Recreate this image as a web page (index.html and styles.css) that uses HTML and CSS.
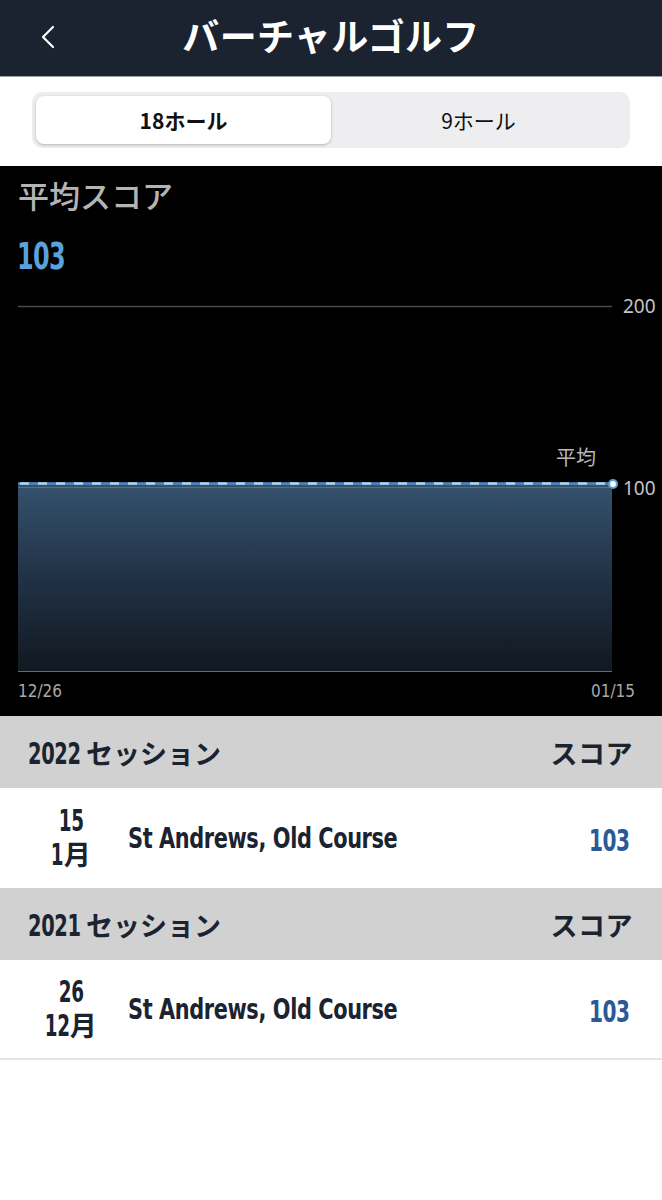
FILE: index.html
```html
<!DOCTYPE html>
<html lang="ja">
<head>
<meta charset="utf-8">
<link rel="stylesheet" href="styles.css">
</head>
<body>
<header class="topbar">
  <button class="back" aria-label="戻る">
    <svg width="16" height="24" viewBox="0 0 16 24"><path d="M13 2 L3 12 L13 22" fill="none" stroke="#ffffff" stroke-width="2.2" stroke-linecap="round" stroke-linejoin="round"/></svg>
  </button>
  <h1 class="title">バーチャルゴルフ</h1>
</header>

<div class="segwrap">
  <div class="seg">
    <div class="seg-item active">18ホール</div>
    <div class="seg-item">9ホール</div>
  </div>
</div>

<section class="chart">
  <div class="chart-title">平均スコア</div>
  <div class="chart-score"><span class="cond">103</span></div>
  <svg class="chart-svg" width="662" height="443" viewBox="0 0 662 443">
    <defs>
      <linearGradient id="areaGrad" x1="0" y1="0" x2="0" y2="1">
        <stop offset="0" stop-color="#35526e"/>
        <stop offset="0.5" stop-color="#213246"/>
        <stop offset="1" stop-color="#111820"/>
      </linearGradient>
    </defs>
    <line x1="18" y1="33.5" x2="612" y2="33.5" stroke="#4a4a4a" stroke-width="1.5"/>
    <text x="623" y="40" class="axis">200</text>
    <rect x="18" y="210" width="594" height="188" fill="url(#areaGrad)"/>
    <line x1="18" y1="214.5" x2="612" y2="214.5" stroke="#52708d" stroke-width="1"/>
    <line x1="18" y1="210.5" x2="612" y2="210.5" stroke="#4d8ccb" stroke-width="2.5"/>
    <line x1="20" y1="210.5" x2="608" y2="210.5" stroke="#b4d4ee" stroke-width="2.5" stroke-dasharray="9 9"/>
    <circle cx="613" cy="211" r="4" fill="#ffffff" stroke="#5b9bd5" stroke-width="2.2"/>
    <text x="556" y="192" class="avg">平均</text>
    <text x="623" y="222" class="axis">100</text>
    <line x1="18" y1="398.5" x2="612" y2="398.5" stroke="#6a6a6a" stroke-width="1"/>
    <text x="18" y="424" class="date">12/26</text>
    <text x="635" y="424" class="date" text-anchor="end">01/15</text>
  </svg>
</section>

<section class="session">
  <div class="session-head">
    <span class="sh-left"><span class="year"><span class="cond">2022</span></span>セッション</span>
    <span class="sh-right">スコア</span>
  </div>
  <div class="round">
    <div class="r-date"><span class="day"><span class="cond">15</span></span><span class="month"><span class="cond mnum">1</span>月</span></div>
    <div class="r-course"><span class="cond">St Andrews, Old Course</span></div>
    <div class="r-score"><span class="cond">103</span></div>
  </div>
</section>

<section class="session">
  <div class="session-head">
    <span class="sh-left"><span class="year"><span class="cond">2021</span></span>セッション</span>
    <span class="sh-right">スコア</span>
  </div>
  <div class="round last">
    <div class="r-date"><span class="day"><span class="cond">26</span></span><span class="month"><span class="cond mnum two">12</span>月</span></div>
    <div class="r-course"><span class="cond">St Andrews, Old Course</span></div>
    <div class="r-score"><span class="cond">103</span></div>
  </div>
</section>
</body>
</html>
```

FILE: styles.css
```css
* { box-sizing: border-box; }
html, body { margin: 0; padding: 0; background: #ffffff; }
body {
  width: 662px;
  font-family: "Noto Sans CJK JP", "Noto Sans", sans-serif;
}

.cond {
  display: inline-block;
  font-family: "DejaVu Sans Condensed", "DejaVu Sans", sans-serif;
  font-weight: 700;
  white-space: nowrap;
}

.topbar {
  height: 76px;
  background: #1b2330;
  display: flex;
  align-items: center;
  justify-content: center;
  position: relative;
}
.back {
  position: absolute;
  left: 40px;
  top: 25px;
  background: none;
  border: 0;
  padding: 0;
  width: 16px;
  height: 24px;
  display: flex;
}
.title {
  margin: 0;
  color: #ffffff;
  font-size: 37px;
  font-weight: 700;
  line-height: 1;
  margin-top: -6px;
  letter-spacing: 0.3px;
}

.segwrap {
  height: 90px;
  padding: 15px 32px 0 32px;
  border-top: 1px solid #9aa0a8;
}
.seg {
  height: 56px;
  background: #eeeef0;
  border-radius: 10px;
  padding: 4px;
  display: flex;
}
.seg-item {
  flex: 1;
  display: flex;
  align-items: center;
  justify-content: center;
  font-size: 21px;
  font-weight: 400;
  color: #111111;
  border-radius: 8px;
}
.seg-item.active {
  background: #ffffff;
  font-weight: 700;
  box-shadow: 0 1px 3px rgba(0,0,0,0.25);
}

.chart {
  background: #000000;
  height: 550px;
  padding-top: 9px;
}
.chart-title {
  color: #b4b4b4;
  font-size: 31px;
  font-weight: 500;
  line-height: 40px;
  padding-left: 18px;
}
.chart-score {
  color: #5aa2dc;
  font-size: 38px;
  line-height: 40px;
  height: 40px;
  margin-top: 18px;
  padding-left: 17px;
}
.chart-score .cond {
  transform: scaleX(0.7);
  transform-origin: left center;
  letter-spacing: -1px;
}
.chart-svg { display: block; }
.axis {
  fill: #c4c4c4;
  font-family: "Noto Sans", sans-serif;
  font-size: 19px;
}
.avg {
  fill: #b8b8b8;
  font-family: "Noto Sans CJK JP", sans-serif;
  font-size: 20px;
}
.date {
  fill: #a8a8a8;
  font-family: "DejaVu Sans Condensed", "Noto Sans", sans-serif;
  font-size: 17px;
}

.session-head {
  height: 72px;
  background: #d1d1d1;
  display: flex;
  align-items: center;
  justify-content: space-between;
  padding: 0 29px 0 28px;
  color: #1b2330;
  font-size: 27px;
  font-weight: 700;
}
.sh-left { display: flex; align-items: center; }
.year {
  display: inline-block;
  width: 58px;
  font-size: 30px;
  line-height: 1;
}
.year .cond {
  transform: scaleX(0.72);
  transform-origin: left center;
  letter-spacing: -0.5px;
}
.sh-right { letter-spacing: 0.5px; }

.round {
  height: 100px;
  background: #ffffff;
  display: flex;
  align-items: center;
  padding-right: 32px;
  color: #1b2330;
}
.round.last { border-bottom: 2px solid #e4e4e4; }
.r-date {
  width: 128px;
  padding-left: 14px;
  padding-bottom: 5px;
  display: flex;
  flex-direction: column;
  align-items: center;
  font-weight: 700;
  line-height: 36px;
}
.day { font-size: 30px; height: 36px; display: block; }
.day .cond {
  transform: scaleX(0.68);
  transform-origin: center;
  letter-spacing: -0.5px;
}
.month {
  font-size: 27px;
  display: flex;
  align-items: baseline;
  height: 36px;
}
.mnum {
  font-size: 30px;
  transform: scaleX(0.68);
  transform-origin: right center;
  letter-spacing: -0.5px;
  margin-left: -6px;
}
.mnum.two { margin-left: -12px; }
.r-course {
  flex: 1;
  font-size: 29px;
  color: #1b2330;
  padding-bottom: 6px;
}
.r-course .cond {
  transform: scaleX(0.8);
  transform-origin: left center;
  letter-spacing: -0.5px;
}
.r-score {
  color: #2a5a96;
  font-size: 31px;
  text-align: right;
  padding-bottom: 2px;
}
.r-score .cond {
  transform: scaleX(0.72);
  transform-origin: right center;
  letter-spacing: -0.5px;
  padding-top: 4px;
}
```
